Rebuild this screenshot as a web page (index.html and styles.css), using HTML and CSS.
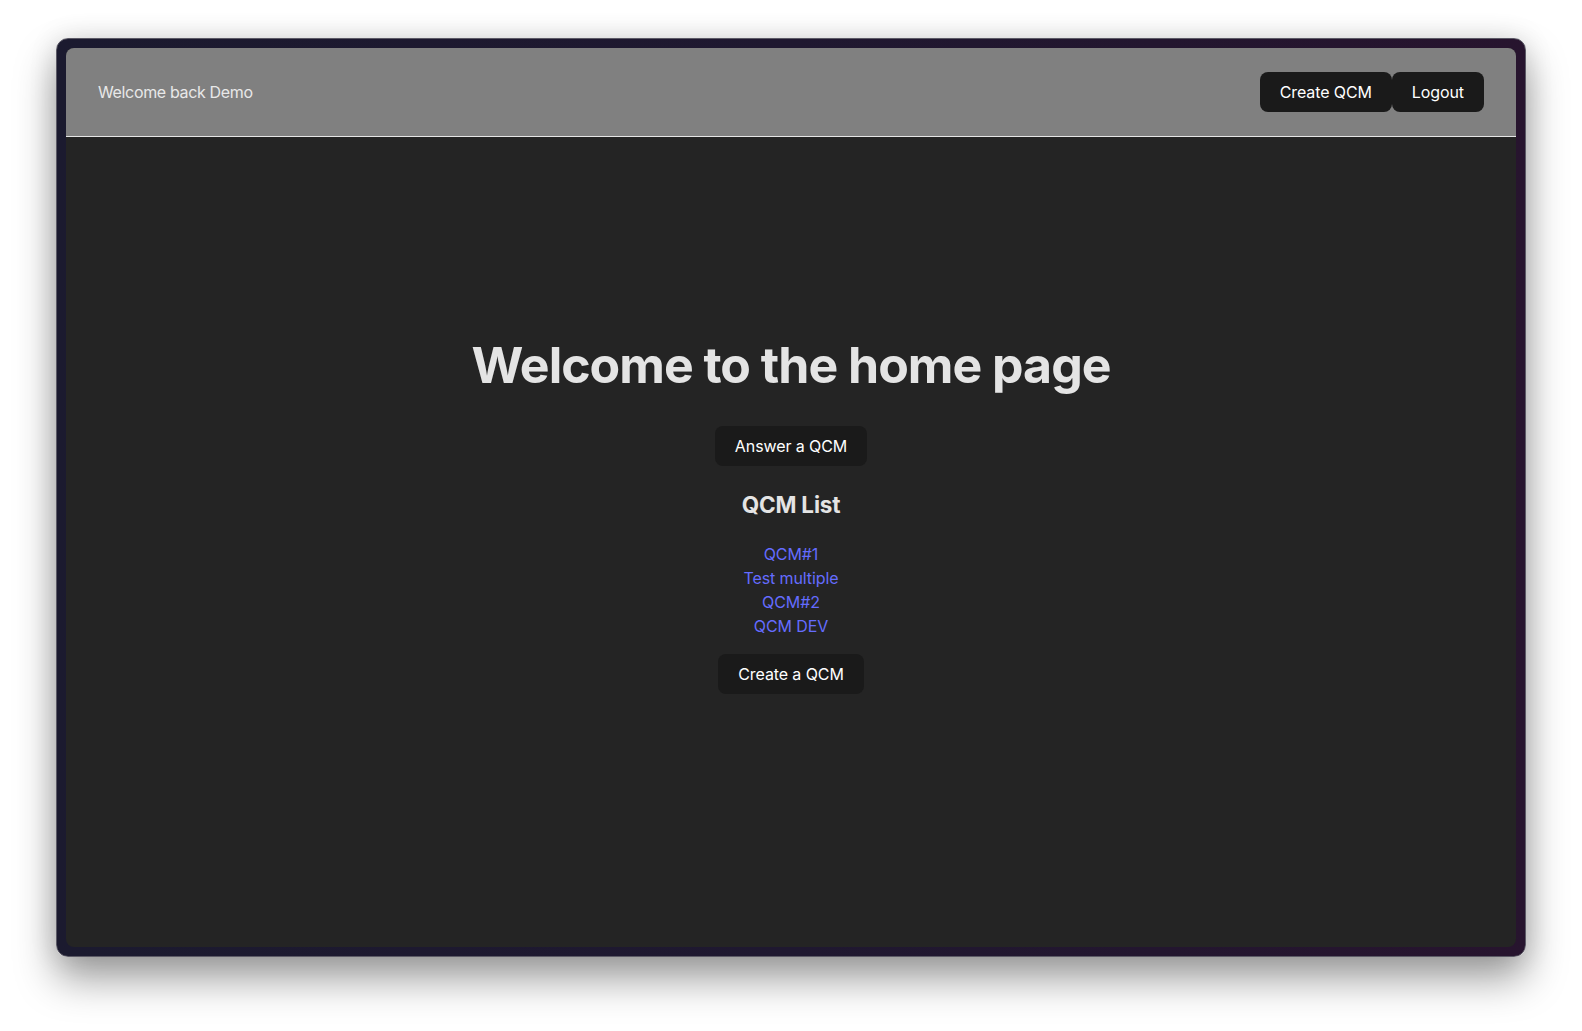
FILE: index.html
```html
<!DOCTYPE html>
<html lang="en">
<head>
<meta charset="utf-8">
<title>QCM</title>
<link rel="stylesheet" href="styles.css">
</head>
<body>
  <div class="window">
    <div class="screen">
      <header class="topbar">
        <span class="greeting">Welcome back Demo</span>
        <nav class="actions">
          <button class="btn">Create QCM</button>
          <button class="btn">Logout</button>
        </nav>
      </header>
      <main class="home">
        <h1 class="title">Welcome to the home page</h1>
        <button class="btn">Answer a QCM</button>
        <h2 class="subtitle">QCM List</h2>
        <ul class="qcm-list">
          <li><a href="#">QCM#1</a></li>
          <li><a href="#">Test multiple</a></li>
          <li><a href="#">QCM#2</a></li>
          <li><a href="#">QCM DEV</a></li>
        </ul>
        <button class="btn">Create a QCM</button>
      </main>
    </div>
  </div>
</body>
</html>
```
FILE: styles.css
```css
* { box-sizing: border-box; }

html, body {
  margin: 0;
  height: 100%;
}

body {
  background: #ffffff;
  padding: 38px 56px 74px 56px;
  font-family: Inter, "Noto Sans", sans-serif;
  display: flex;
}

.window {
  flex: 1;
  display: flex;
  padding: 9px;
  border: 1px solid #5c5a66;
  border-radius: 12px;
  background: linear-gradient(90deg, #1b1a2f 0%, #1f1830 50%, #27142e 100%);
  box-shadow: 0 22px 40px rgba(0, 0, 0, 0.38), 0 0 28px rgba(0, 0, 0, 0.12);
}

.screen {
  flex: 1;
  display: flex;
  flex-direction: column;
  background: #242424;
  border-radius: 8px;
  overflow: hidden;
  color: rgba(255, 255, 255, 0.87);
}

.topbar {
  height: 89px;
  flex: none;
  display: flex;
  align-items: center;
  justify-content: space-between;
  padding: 0 32px 1px 32px;
  background: #808080;
  border-bottom: 1px solid #e6e6e6;
}

.greeting {
  font-size: 16px;
  color: #e8e8e8;
  letter-spacing: -0.35px;
}

.actions {
  display: flex;
}

.btn {
  height: 40px;
  padding: 0 19px;
  border: 1px solid transparent;
  border-radius: 8px;
  background: #1a1a1a;
  color: #ffffff;
  font-family: inherit;
  font-size: 16px;
  font-weight: 400;
  letter-spacing: -0.1px;
  cursor: pointer;
}

.home {
  flex: 1;
  display: flex;
  flex-direction: column;
  align-items: center;
  padding-top: 201px;
}

.title {
  margin: 0 0 33px 0;
  font-size: 50px;
  line-height: 1.1;
  font-weight: 700;
  color: #e4e4e4;
  letter-spacing: -1px;
}

.subtitle {
  margin: 26px 0 24px 0;
  font-size: 22.5px;
  line-height: 26px;
  font-weight: 700;
  color: #e4e4e4;
  letter-spacing: -0.2px;
}

.qcm-list {
  list-style: none;
  margin: 0 0 16px 0;
  padding: 0;
  text-align: center;
}

.qcm-list li {
  font-size: 16px;
  line-height: 24px;
}

.qcm-list a {
  color: #646cff;
  text-decoration: none;
  font-weight: 400;
  letter-spacing: -0.1px;
}
```
